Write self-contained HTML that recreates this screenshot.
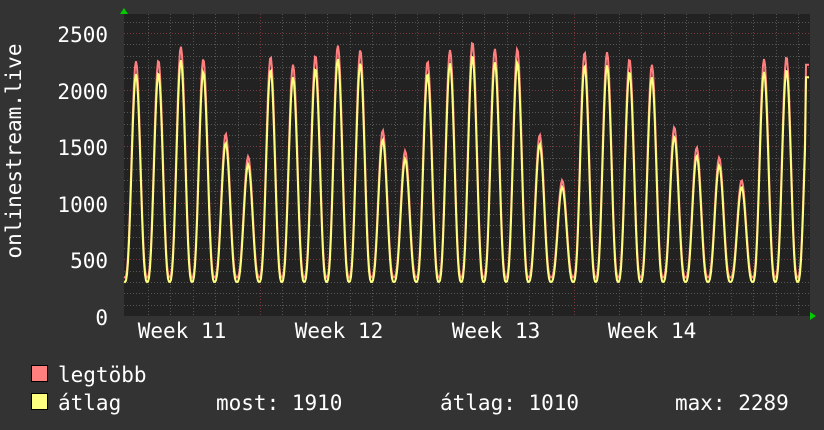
<!DOCTYPE html>
<html><head><meta charset="utf-8"><style>
html,body{margin:0;padding:0;background:#333;}
svg{display:block;}
text{font-family:"DejaVu Sans Mono","Liberation Mono",monospace;fill:#fff;font-size:21px;}
</style></head><body>
<svg id="g" width="824" height="430" xmlns="http://www.w3.org/2000/svg">
<rect width="824" height="430" fill="#333"/>
<rect x="124" y="14" width="686" height="302" fill="#222"/>
<g id="grid"></g>
<g id="data"></g>
<polygon points="120,14 128,14 124,8" fill="#0c0"/>
<polygon points="810,312 810,320 816,316" fill="#0c0"/>
<g text-anchor="end">
<text x="108" y="42">2500</text>
<text x="108" y="99">2000</text>
<text x="108" y="155">1500</text>
<text x="108" y="212">1000</text>
<text x="108" y="268">500</text>
<text x="108" y="325">0</text>
</g>
<text transform="translate(21,151) rotate(-90)" text-anchor="middle">onlinestream.live</text>
<g text-anchor="middle">
<text x="182" y="338">Week 11</text>
<text x="339" y="338">Week 12</text>
<text x="496" y="338">Week 13</text>
<text x="652" y="338">Week 14</text>
</g>
<rect x="31.5" y="365.5" width="16" height="16" fill="#ff7f7f" stroke="#000"/>
<rect x="31.5" y="393.5" width="16" height="16" fill="#ffff7f" stroke="#000"/>
<text x="58" y="382">legtöbb</text>
<text x="58" y="410">átlag</text>
<text x="216" y="410">most: 1910</text>
<text x="440" y="410">átlag: 1010</text>
<text x="675" y="410">max: 2289</text>
</svg>
<script>
var ns="http://www.w3.org/2000/svg",grid=document.getElementById('grid'),data=document.getElementById('data');
function Y(v){return 316-v*0.1132;}
function line(x1,y1,x2,y2,c){var l=document.createElementNS(ns,'line');l.setAttribute('x1',x1);l.setAttribute('y1',y1);l.setAttribute('x2',x2);l.setAttribute('y2',y2);l.setAttribute('stroke',c);l.setAttribute('stroke-width',1);l.setAttribute('stroke-dasharray','1,2');grid.appendChild(l);}
for(var v=100;v<=2600;v+=100){var y=Math.round(Y(v))+.5;line(124,y,810,y,v%500==0?'#7a3a3a':'#555');}
var d=22.43;
for(var k=-20;k<20;k++){var x=574+k*d;if(x<126||x>809)continue;x=Math.round(x)+.5;line(x,14,x,316,(k%7==0)?'#7a3a3a':'#555');}
var peaks=[2250,2260,2380,2270,1610,1410,2290,2220,2300,2390,2350,1640,1460,2250,2350,2420,2360,2360,1600,1200,2330,2330,2270,2220,1670,1490,1400,1200,2270,2290,2220];
var p0=136;
function val(x,scale,tr){var t=(x-p0)/d;var i=Math.round(t);if(i<0)i=0;if(i>=peaks.length)i=peaks.length-1;var f=t-Math.round(t);
var s=Math.pow((1+Math.cos(2*Math.PI*f))/2,1.4);return tr+(peaks[i]*scale-tr)*s;}
function poly(scale,tr,col){var pts=[];for(var x=124;x<=809;x+=1){var v=val(x,scale,tr);if(x>=806)v=peaks[30]*scale;pts.push(x+','+Y(v).toFixed(1));}
var p=document.createElementNS(ns,'polyline');p.setAttribute('points',pts.join(' '));p.setAttribute('fill','none');p.setAttribute('stroke',col);p.setAttribute('stroke-width',2);data.appendChild(p);}
poly(1,340,'#ff7f7f');poly(0.95,300,'#ffff7f');
</script>
</body></html>
